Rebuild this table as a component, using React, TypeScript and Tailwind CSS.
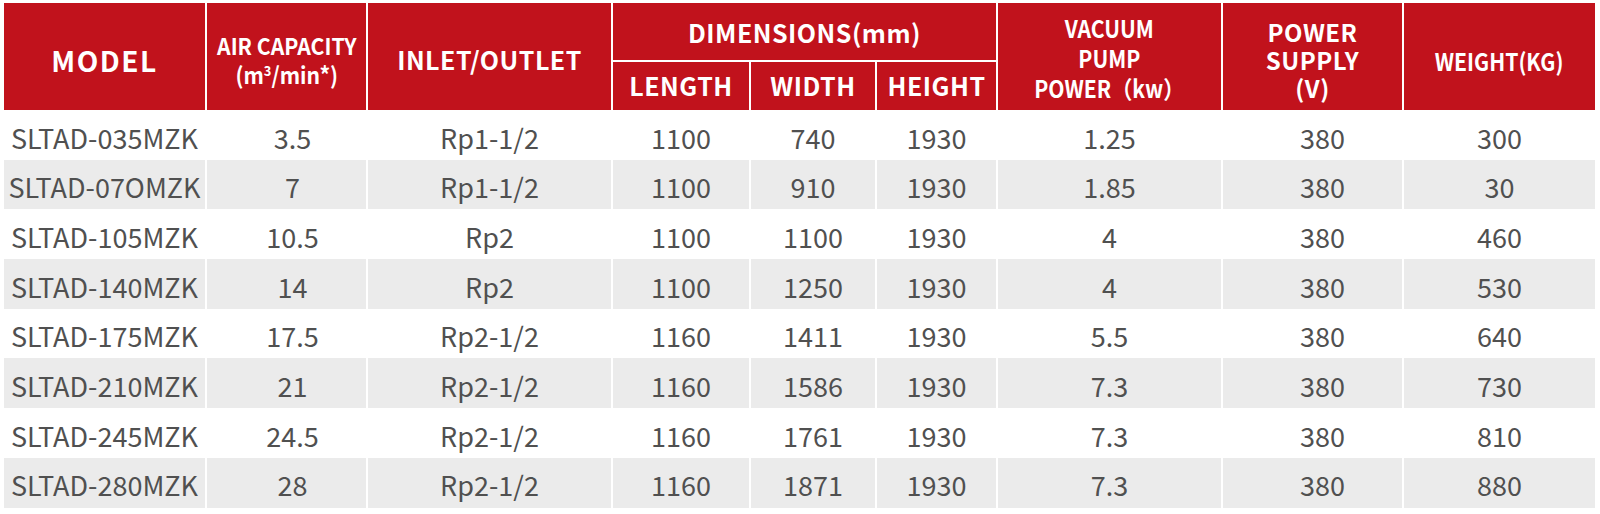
import React from "react";

const rows: string[][] = [
  ["SLTAD-035MZK", "3.5", "Rp1-1/2", "1100", "740", "1930", "1.25", "380", "300"],
  ["SLTAD-07OMZK", "7", "Rp1-1/2", "1100", "910", "1930", "1.85", "380", "30"],
  ["SLTAD-105MZK", "10.5", "Rp2", "1100", "1100", "1930", "4", "380", "460"],
  ["SLTAD-140MZK", "14", "Rp2", "1100", "1250", "1930", "4", "380", "530"],
  ["SLTAD-175MZK", "17.5", "Rp2-1/2", "1160", "1411", "1930", "5.5", "380", "640"],
  ["SLTAD-210MZK", "21", "Rp2-1/2", "1160", "1586", "1930", "7.3", "380", "730"],
  ["SLTAD-245MZK", "24.5", "Rp2-1/2", "1160", "1761", "1930", "7.3", "380", "810"],
  ["SLTAD-280MZK", "28", "Rp2-1/2", "1160", "1871", "1930", "7.3", "380", "880"],
];

const font = { fontFamily: '"Noto Sans CJK SC", "Noto Sans", sans-serif' };

const head =
  "bg-[#c1121c] text-white font-bold flex items-center justify-center text-center";

export default function App() {
  return (
    <div className="bg-white w-[1600px] h-[514px] pt-[3px] pl-[4px]" style={font}>
      <div className="grid grid-cols-[201px_159px_243px_136px_124px_119px_223px_179px_191px] grid-rows-[57px_50px_repeat(8,49.7px)] gap-x-[2px]">
        <div className={`${head} row-span-2 text-[28px] tracking-[1.5px] pt-[6px]`}>MODEL</div>
        <div className={`${head} row-span-2 text-[23px] leading-[29px] pt-[6px]`}>
          <span className="inline-block scale-x-[0.92] whitespace-nowrap">
            <span className="block">AIR CAPACITY</span>
            <span className="block">
              (m<span className="relative -top-[8px] text-[14px] leading-none">3</span>/min*)
            </span>
          </span>
        </div>
        <div className={`${head} row-span-2 text-[25px] tracking-[0.5px] pt-[6px]`}>INLET/OUTLET</div>
        <div className={`${head} col-span-3 text-[25px] tracking-[0.5px] pt-[2px]`}>DIMENSIONS(mm)</div>
        <div className={`${head} row-span-2 text-[24px] leading-[30px] pt-[2px]`}>
          <span className="inline-block scale-x-[0.88] whitespace-nowrap">
            VACUUM
            <br />
            PUMP
            <br />
            POWER（kw）
          </span>
        </div>
        <div className={`${head} row-span-2 text-[24px] leading-[28px] tracking-[0.5px] pt-[6px]`}>
          <span>
            POWER
            <br />
            SUPPLY
            <br />
            (V)
          </span>
        </div>
        <div className={`${head} row-span-2 text-[24px] pt-[8px]`}>
          <span className="inline-block scale-x-[0.88] whitespace-nowrap">WEIGHT(KG)</span>
        </div>
        <div className={`${head} border-t-2 border-white text-[25px] tracking-[0.5px]`}>LENGTH</div>
        <div className={`${head} border-t-2 border-white text-[25px] tracking-[0.5px]`}>WIDTH</div>
        <div className={`${head} border-t-2 border-white text-[25px] tracking-[0.5px]`}>HEIGHT</div>

        {rows.map((r, i) =>
          r.map((c, j) => (
            <div
              key={`${i}-${j}`}
              className={`flex items-center justify-center text-[27px] text-[#505050] pt-[6px] ${
                i % 2 === 1 ? "bg-[#ebebeb]" : "bg-white"
              } ${j === 1 ? "pl-[12px]" : ""} ${j === 7 ? "pl-[20px]" : ""}`}
            >
              {c}
            </div>
          ))
        )}
      </div>
    </div>
  );
}
